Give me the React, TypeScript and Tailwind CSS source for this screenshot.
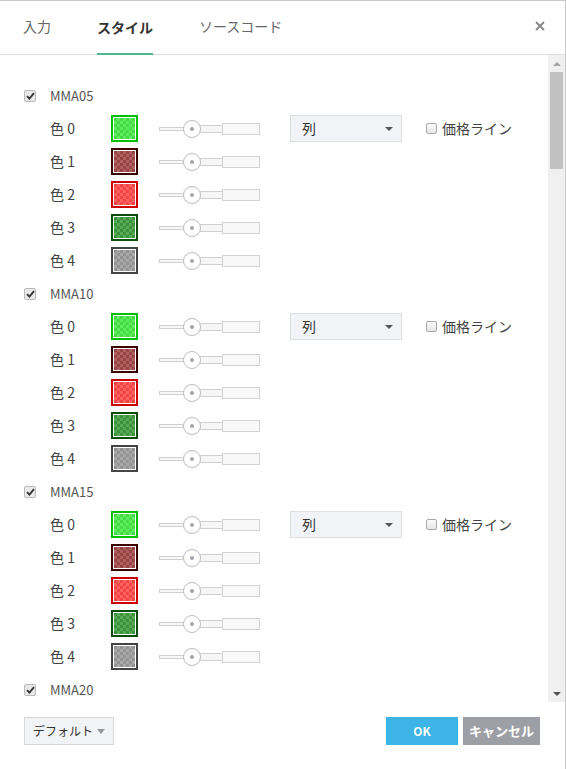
const swatches = [
  { border: 'border-[#00c000]', fill: 'bg-[#47e847]' },
  { border: 'border-[#3d0000]', fill: 'bg-[#a04848]' },
  { border: 'border-[#cc0000]', fill: 'bg-[#ff4a4a]' },
  { border: 'border-[#0b4d0b]', fill: 'bg-[#3e9b3e]' },
  { border: 'border-[#444444]', fill: 'bg-[#9b9b9b]' },
];

const groups = ['MMA05', 'MMA10', 'MMA15', 'MMA20'];

function CheckedBox() {
  return (
    <span className="w-[12px] h-[12px] rounded-[2px] border border-[#b9b9b9] bg-[#e9e9e9] flex items-center justify-center shrink-0">
      <svg width="9" height="8" viewBox="0 0 9 8">
        <path d="M1 4.2 L3.4 6.6 L8 1.2" fill="none" stroke="#333" strokeWidth="1.8" />
      </svg>
    </span>
  );
}

function EmptyBox() {
  return (
    <span className="w-[11px] h-[11px] rounded-[2px] border border-[#a9a9a9] bg-gradient-to-b from-[#fbfbfb] to-[#e6e6e6] shrink-0" />
  );
}

function Slider() {
  return (
    <div className="relative w-[101px] h-[20px] shrink-0">
      <div className="absolute left-0 top-[8px] w-[26px] h-[4px] border border-[#cfcfcf] bg-[#f6f6f6]" />
      <div className="absolute left-[40px] top-[6px] w-[24px] h-[8px] border border-[#cfcfcf] bg-[#f6f6f6]" />
      <div className="absolute left-[63px] top-[4px] w-[38px] h-[12px] border border-[#d2d2d2] bg-[#f8f8f8]" />
      <div className="absolute left-[24px] top-[1px] w-[18px] h-[18px] rounded-full border border-[#b9bcc3] bg-white flex items-center justify-center">
        <span className="w-[4px] h-[4px] rounded-full bg-[#a3a6ad]" />
      </div>
    </div>
  );
}

function ColorRow({ index }: { index: number }) {
  const s = swatches[index];
  return (
    <div className="h-[33px] flex items-center">
      <span className="pl-[50px] w-[111px] text-[14px] text-[#444]">色 {index}</span>
      <div className={`w-[27px] h-[27px] border-2 ${s.border} bg-white p-px shrink-0`}>
        <div
          className={`w-full h-full ${s.fill} bg-[image:repeating-conic-gradient(rgba(255,255,255,0.13)_0_25%,rgba(0,0,0,0.05)_0_50%)] bg-[length:6px_6px]`}
        />
      </div>
      <div className="ml-[21px]">
        <Slider />
      </div>
      {index === 0 && (
        <>
          <div className="ml-[30px] w-[112px] h-[27px] border border-[#dcdfe4] bg-[#f1f3f6] flex items-center justify-between pl-[11px] pr-[8px] text-[14px] text-[#333]">
            <span>列</span>
            <span className="w-0 h-0 border-l-[4px] border-r-[4px] border-t-[4px] border-l-transparent border-r-transparent border-t-[#555]" />
          </div>
          <div className="ml-[24px] flex items-center gap-[5px] text-[14px] text-[#444]">
            <EmptyBox />
            <span>価格ライン</span>
          </div>
        </>
      )}
    </div>
  );
}

function Group({ name, open }: { name: string; open: boolean }) {
  return (
    <div>
      <div className="h-[33px] flex items-center pl-[24px] gap-[14px]">
        <CheckedBox />
        <span className="text-[13px] text-[#555]">{name}</span>
      </div>
      {open &&
        [0, 1, 2, 3, 4].map((i) => (
          <ColorRow key={i} index={i} />
        ))}
    </div>
  );
}

export default function App() {
  return (
    <div className="w-[566px] h-[769px] bg-white border-t border-r border-[#c9c9c9] flex flex-col font-['Noto_Sans_CJK_JP','Noto_Sans',sans-serif]">
      <div className="h-[54px] border-b border-[#dedede] flex items-stretch pl-[23px] pr-[20px] shrink-0">
        <div className="flex items-stretch gap-[46px] text-[14px]">
          <span className="flex items-center text-[#666] pb-[3px]">入力</span>
          <span className="flex items-center font-bold text-[#333] border-b-2 border-[#4cb78a] pt-[1px] -mb-px">スタイル</span>
          <span className="flex items-center text-[#666] pb-[3px]">ソースコード</span>
        </div>
        <div className="ml-auto flex items-center pb-[3px]">
          <svg width="10" height="10" viewBox="0 0 10 10">
            <path d="M1 1 L9 9 M9 1 L1 9" stroke="#8a8a8a" strokeWidth="2" />
          </svg>
        </div>
      </div>

      <div className="flex-1 flex min-h-0">
        <div className="flex-1 overflow-hidden pt-[24px]">
          {groups.map((g, i) => (
            <Group key={g} name={g} open={i < 3} />
          ))}
        </div>
        <div className="w-[17px] bg-[#f0f0f0] flex flex-col items-center shrink-0">
          <div className="h-[17px] flex items-center justify-center">
            <span className="w-0 h-0 border-l-[4px] border-r-[4px] border-b-[4px] border-l-transparent border-r-transparent border-b-[#a3a3a3]" />
          </div>
          <div className="w-[13px] h-[97px] bg-[#c1c1c1]" />
          <div className="flex-1" />
          <div className="h-[17px] flex items-center justify-center">
            <span className="w-0 h-0 border-l-[4px] border-r-[4px] border-t-[4px] border-l-transparent border-r-transparent border-t-[#505050]" />
          </div>
        </div>
      </div>

      <div className="h-[67px] shrink-0 flex items-start pt-[15px] pl-[24px] pr-[25px]">
        <div className="w-[90px] h-[28px] pl-[8px] border border-[#d6d8dc] bg-[#f2f3f5] flex items-center gap-[4px] text-[12px] text-[#333]">
          <span>デフォルト</span>
          <span className="w-0 h-0 border-l-[4px] border-r-[4px] border-t-[5px] border-l-transparent border-r-transparent border-t-[#999]" />
        </div>
        <div className="ml-auto flex gap-[5px]">
          <div className="w-[72px] h-[28px] bg-[#3cb4e5] text-white font-bold text-[12px] flex items-center justify-center">OK</div>
          <div className="w-[77px] h-[28px] bg-[#9d9fa6] text-white font-bold text-[13px] flex items-center justify-center">キャンセル</div>
        </div>
      </div>
    </div>
  );
}
